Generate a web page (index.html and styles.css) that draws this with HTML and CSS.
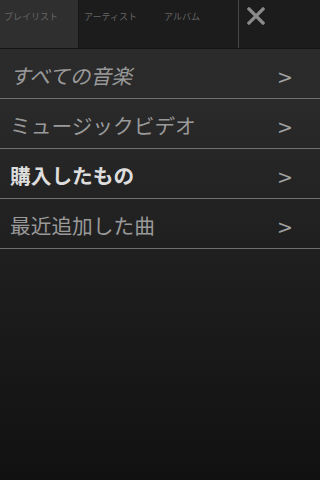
FILE: index.html
```html
<!DOCTYPE html>
<html>
<head>
    <meta charset="utf-8">
    <link rel="stylesheet" href="styles.css">
</head>
<body>
    <div class="tabs">
        <div class="tab tab-active">プレイリスト</div>
        <div class="tab">アーティスト</div>
        <div class="tab tab-last">アルバム</div>
        <div class="tab tab-close">
            <svg width="18" height="18" viewBox="0 0 18 18">
                <path d="M2 2 L16 16 M16 2 L2 16" stroke="#8a8a8a" stroke-width="3.2" stroke-linecap="square"/>
            </svg>
        </div>
    </div>
    <ul class="menu">
        <li class="item item-italic"><span>すべての音楽</span><span class="chevron">&gt;</span></li>
        <li class="item"><span>ミュージックビデオ</span><span class="chevron">&gt;</span></li>
        <li class="item item-bold"><span>購入したもの</span><span class="chevron">&gt;</span></li>
        <li class="item"><span>最近追加した曲</span><span class="chevron">&gt;</span></li>
    </ul>
</body>
</html>
```

FILE: styles.css
```css
html, body {
    height: 100%;
}
body {
    margin: 0;
    font-family: "Noto Sans CJK JP", "Noto Sans", sans-serif;
    background: linear-gradient(#2c2c2c 0, #2a2a2a 100px, #1f1f1f 250px, #111111 100%);
    color: #999999;
}
.tabs {
    display: flex;
    height: 48px;
    border-bottom: 1px solid #141414;
}
.tab {
    width: 79px;
    background-color: #1c1c1c;
    font-size: 9px;
    line-height: 1;
    color: #666666;
    padding: 12px 0 0 5px;
    box-sizing: border-box;
}
.tab-active {
    width: 79px;
    background-color: #2f2f2f;
    border-right: 1px solid #171717;
    padding-left: 4px;
}
.tab-last {
    width: 81px;
    border-right: 1px solid #474747;
    padding-left: 6px;
}
.tab-close {
    flex: 1;
    padding: 7px 0 0 8px;
}
.menu {
    list-style: none;
    margin: 0;
    padding: 0;
}
.item {
    display: flex;
    align-items: center;
    justify-content: space-between;
    border-bottom: 1px solid #6f6f6f;
    padding: 2px 27px 0 10px;
    height: 47px;
    font-size: 20.7px;
    color: #9a9a9a;
}
.item-italic span:first-child {
    font-style: italic;
}
.item-bold {
    font-weight: bold;
    color: #dddddd;
}
.chevron {
    font-family: "DejaVu Sans", sans-serif;
    font-weight: normal;
    font-size: 19px;
    color: #a0a0a0;
    padding-top: 5px;
}
```
